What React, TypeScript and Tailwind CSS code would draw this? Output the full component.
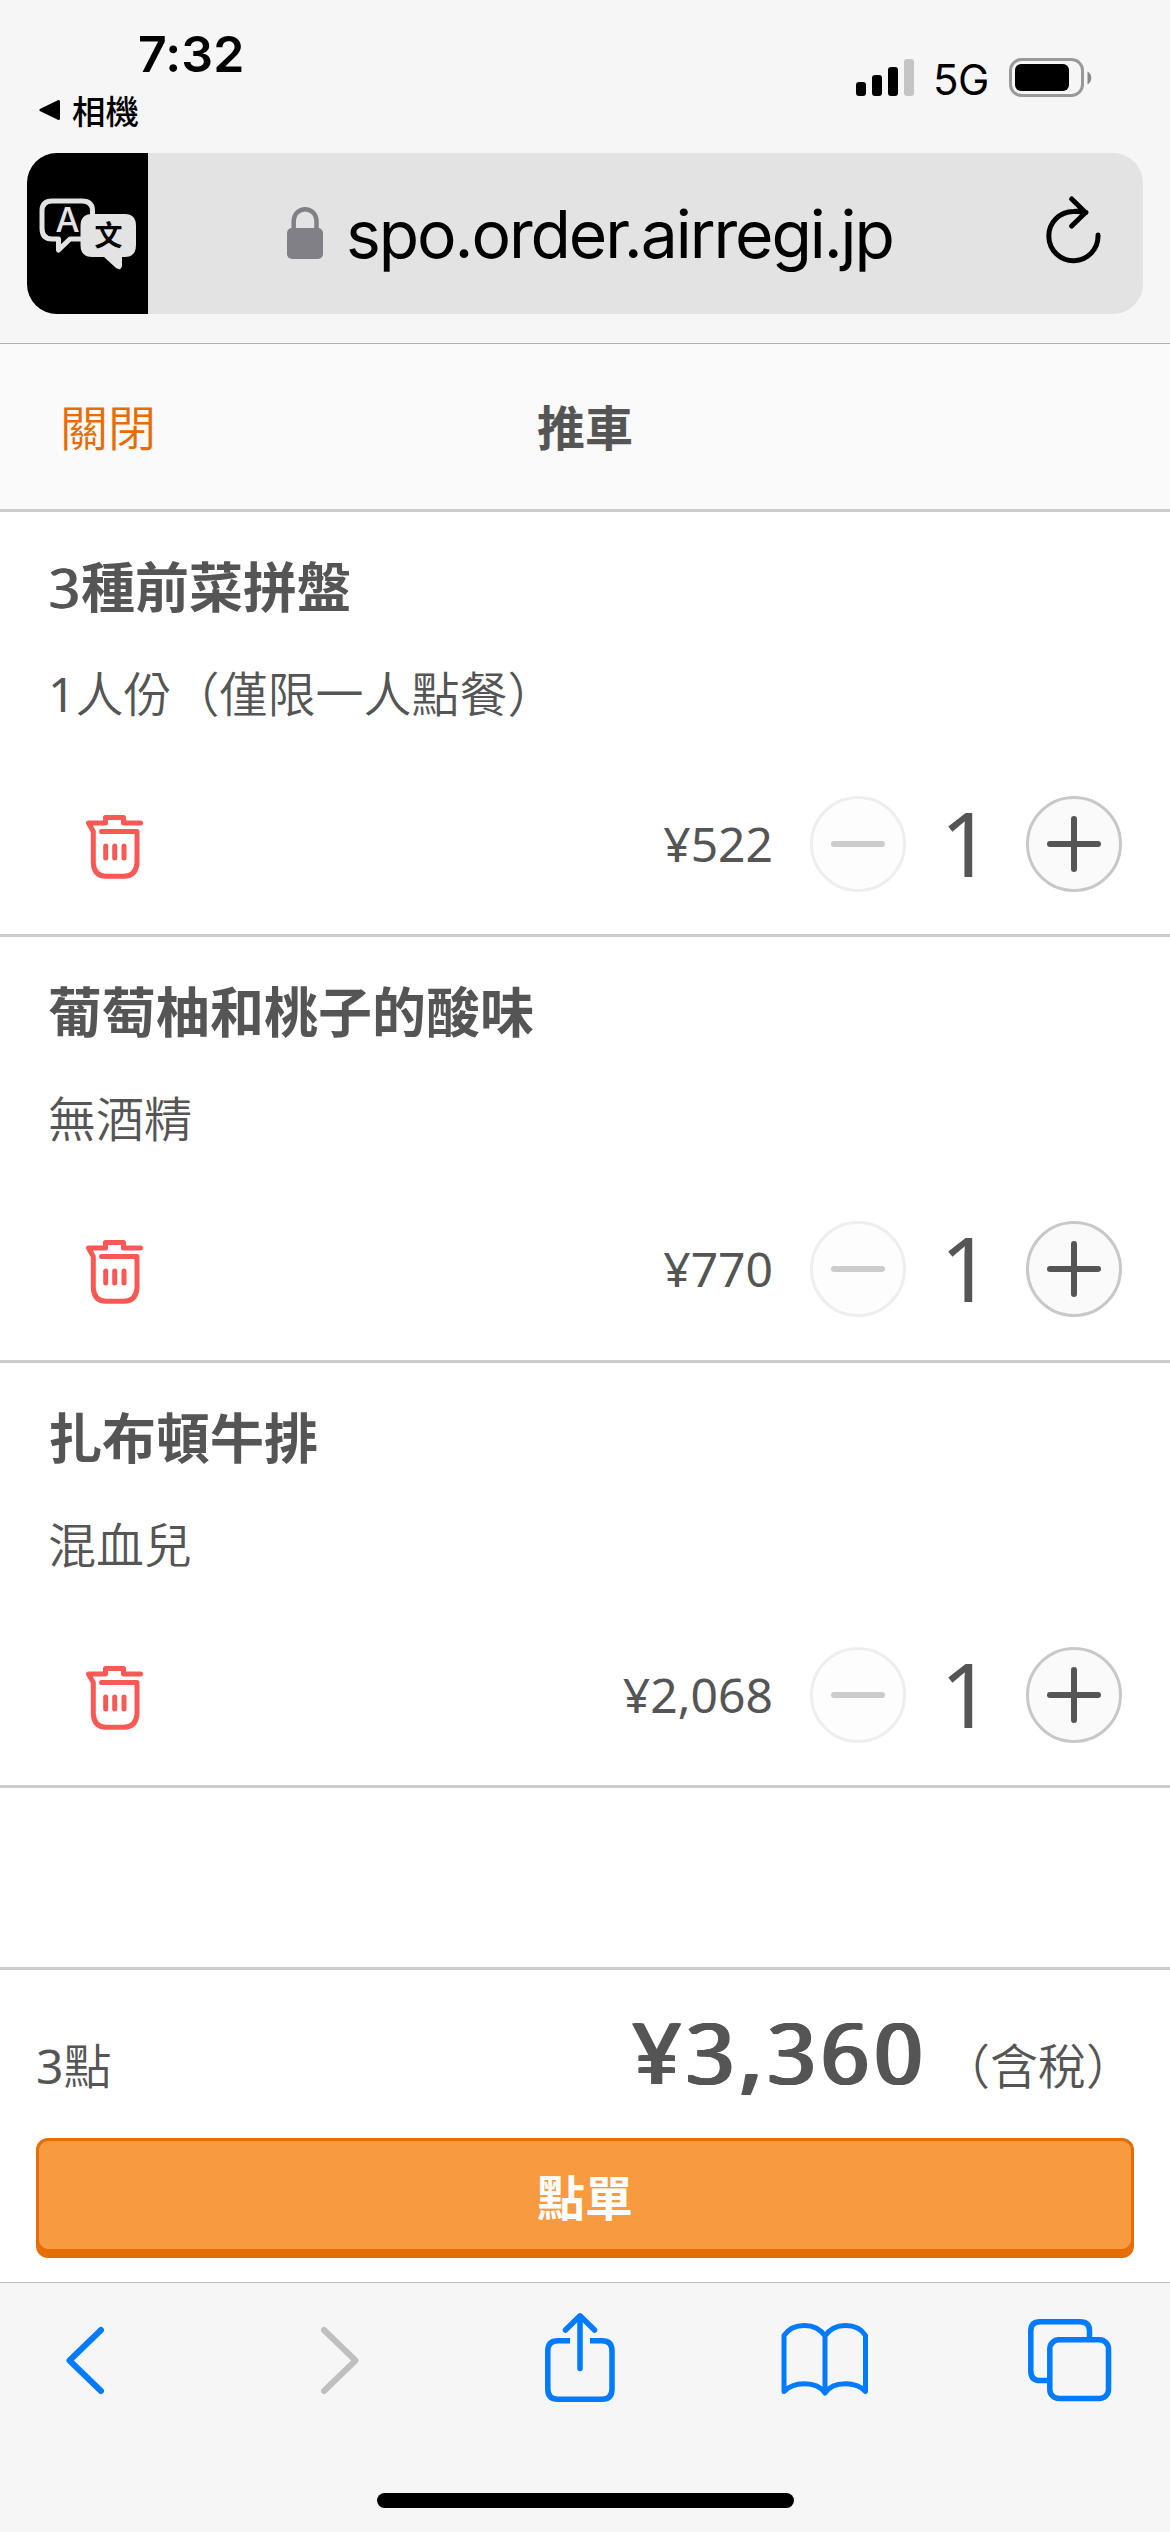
import React from "react";

const items = [
  { name: "種前菜拼盤", count: "3", note: "1人份（僅限一人點餐）", price: "¥522", qty: 1, h: "h-[425px]" },
  { name: "葡萄柚和桃子的酸味", note: "無酒精", price: "¥770", qty: 1, h: "h-[426px]" },
  { name: "扎布頓牛排", note: "混血兒", price: "¥2,068", qty: 1, h: "h-[425px]" },
];

/** Thin CJK text whose digits keep the regular weight. */
function ThinText({ children }: { children: string }) {
  return (
    <span className="font-[350]">
      {children.split(/(\d+)/).map((part, i) =>
        /^\d/.test(part) ? (
          <span key={i} className="font-normal">
            {part}
          </span>
        ) : (
          part
        ),
      )}
    </span>
  );
}

function StatusBar() {
  return (
    <div className="flex h-[153px] justify-between font-['Inter','Noto_Sans_CJK_TC',sans-serif] text-black">
      <div className="flex flex-col">
        <div className="mt-[29px] ml-[138px] text-[50px] leading-[50px] font-semibold tracking-[0.1px]">7:32</div>
        <div className="mt-[14px] ml-[39px] flex h-[34px] items-center">
          <svg width="22" height="22" viewBox="0 0 22 22">
            <path d="M2 11 L19.500 2.500 V19.500 Z" fill="#000" stroke="#000" strokeWidth="3" strokeLinejoin="round" />
          </svg>
          <span className="ml-[11px] font-['Noto_Sans_CJK_TC',sans-serif] text-[33.5px] leading-[34px] font-medium">相機</span>
        </div>
      </div>
      <div className="mt-[56px] mr-[77px] flex h-[42px] items-start">
        <svg width="60" height="42" viewBox="0 0 60 42">
          <rect x="1" y="26" width="10" height="14" rx="3" />
          <rect x="17" y="19" width="10" height="21" rx="3" />
          <rect x="33" y="11" width="10" height="29" rx="3" />
          <rect x="49" y="3" width="10" height="37" rx="3" fill="#c5c5c5" />
        </svg>
        <span className="ml-[18px] w-[60px] text-[42px] leading-[47px] tracking-[-0.5px]">5G</span>
        <svg className="ml-[16px]" width="84" height="44" viewBox="0 0 84 44">
          <rect x="1.500" y="3.500" width="72" height="36" rx="11" fill="none" stroke="#999" strokeWidth="3" />
          <rect x="6" y="8" width="54" height="27" rx="6" />
          <path d="M78.500 15.500 c5 2.500 5 10.500 0 13z" fill="#888" />
        </svg>
      </div>
    </div>
  );
}

function TranslateIcon() {
  return (
    <svg width="121" height="161" viewBox="27 153 121 161">
      <path
        d="M52 201 H82 Q92.500 201 92.500 211 V228 Q92.500 239 82 239 H70 L58.500 250 V239 H52 Q42 239 42 228 V211 Q42 201 52 201 Z"
        fill="none"
        stroke="#e3e3e3"
        strokeWidth="5"
        strokeLinejoin="round"
      />
      <text x="67.500" y="232" textAnchor="middle" className="font-['Inter',sans-serif] text-[34px] font-medium" fill="#e3e3e3">A</text>
      <path
        d="M92 214 H125 Q136 214 136 226 V245 Q136 257 125 257 H122 V266 Q121 271 116 268 L104 257 H92 Q80.500 257 80.500 245 V226 Q80.500 214 92 214 Z"
        fill="#e3e3e3"
      />
      <text x="108.500" y="245.500" textAnchor="middle" className="font-['Noto_Sans_CJK_TC',sans-serif] text-[28px] font-bold" fill="#000">文</text>
    </svg>
  );
}

function AddressBar() {
  return (
    <div className="mx-[27px] flex h-[161px] overflow-hidden rounded-[30px] bg-[#e3e3e3]">
      <div className="w-[121px] bg-black">
        <TranslateIcon />
      </div>
      <svg className="mt-[53px] ml-[139px]" width="36" height="54" viewBox="0 0 36 54">
        <path d="M6.700 24 V16 C6.700 -1 29.500 -1 29.500 16 V24" fill="none" stroke="#808086" strokeWidth="4.500" />
        <rect x="0" y="22" width="36" height="31" rx="5" fill="#808086" />
      </svg>
      <div className="mt-[40px] ml-[23px] w-[560px] font-['Inter',sans-serif] text-[66px] leading-[82px] tracking-[-2.100px] whitespace-nowrap text-black">
        spo.order.airregi.jp
      </div>
      <svg className="mt-[40px] ml-[136px]" width="62" height="74" viewBox="1042 193 62 74">
        <path
          d="M1098 235 A24.600 24.600 0 1 1 1073.400 211.500 Q1080 211 1086 212.500 M1071.700 199 L1085.500 212.500 L1071.700 226"
          fill="none"
          stroke="#000"
          strokeWidth="5"
          strokeLinecap="round"
          strokeLinejoin="round"
        />
      </svg>
    </div>
  );
}

function TrashIcon() {
  return (
    <svg width="60" height="68" viewBox="85 814 60 68">
      <g fill="none" stroke="#f85955" strokeWidth="5" strokeLinecap="round" strokeLinejoin="round">
        <path d="M140.500 824 H123.500 V818.500 H105.500 V824 H88.500 L93.300 832.500 V864 Q94 877 106 877.300 H124 Q136 877 137 864 V832.500 H101.500" />
        <path d="M105.700 847 V859 M114.700 847 V859 M124 847 V859" />
      </g>
    </svg>
  );
}

type ItemProps = { name: string; count?: string; note: string; price: string; qty: number; h: string };

function Item({ name, count, note, price, qty, h }: ItemProps) {
  return (
    <li className={`${h} border-b-3 border-[#ccc] pt-[48px] pr-[48px] pl-[48px]`}>
      <h2 className="text-[54px] leading-[54px] font-semibold">
        {count && <span className="font-normal tracking-[2px] [text-shadow:1px_0,2px_0]">{count}</span>}
        {name}
      </h2>
      <p className="mt-[56px] text-[48px] leading-[48px]">
        <ThinText>{note}</ThinText>
      </p>
      <div className="mt-[78px] flex h-24 items-center">
        <button className="ml-[37px] pt-[6px]">
          <TrashIcon />
        </button>
        <span className="mr-[37px] ml-auto text-[48px] leading-[48px]">{price}</span>
        <button className="grid size-24 place-items-center rounded-full border-3 border-[#eee] bg-[#fdfdfd]">
          <span className="h-[6px] w-[54px] rounded-full bg-[#ccc]" />
        </button>
        <span className="w-[120px] pb-[4px] text-center text-[90px] leading-[90px]">{qty}</span>
        <button className="grid size-24 place-items-center rounded-full border-3 border-[#c8c8c8] bg-[#fafafa]">
          <span className="col-start-1 row-start-1 h-[6px] w-[54px] rounded-full bg-[#555]" />
          <span className="col-start-1 row-start-1 h-[56px] w-[6px] rounded-full bg-[#555]" />
        </button>
      </div>
    </li>
  );
}

function Footer() {
  return (
    <div className="h-[315px] border-t-3 border-[#ccc] px-9">
      <div className="flex h-[168px] items-baseline pt-[40px]">
        <span className="text-[48px] leading-[84px]">
          <ThinText>3點</ThinText>
        </span>
        <span className="ml-auto text-[84px] leading-[84px] tracking-[5.400px] [text-shadow:1px_0,2px_0,3px_0,4px_0]">¥3,360</span>
        <span className="ml-[16px] text-[48px] leading-[84px]">
          <ThinText>（含稅）</ThinText>
        </span>
      </div>
      <button className="flex h-[120px] w-full items-center justify-center rounded-[12px] border-3 border-[#e56d08] bg-[#f89a40] text-[48px] leading-[48px] font-bold text-white shadow-[inset_0_-6px_0_#e56d08]">
        點單
      </button>
    </div>
  );
}

function Toolbar() {
  return (
    <div className="flex h-[250px] flex-col items-center border-t border-[#bfbfbf] bg-[#f6f6f6]">
      <div className="flex h-[154px] w-full items-center pl-[62px]">
        <svg width="46" height="74" viewBox="62 2323 46 74">
          <path d="M101 2330 L69.500 2360.500 L101 2391" fill="none" stroke="#007aff" strokeWidth="6" strokeLinecap="round" strokeLinejoin="round" />
        </svg>
        <svg className="ml-[211px]" width="46" height="74" viewBox="319 2323 46 74">
          <path d="M324 2330 L355.500 2360.500 L324 2391" fill="none" stroke="#bfbfbf" strokeWidth="6" strokeLinecap="round" strokeLinejoin="round" />
        </svg>
        <svg className="ml-[176px]" width="78" height="98" viewBox="541 2311 78 98">
          <g fill="none" stroke="#007aff" strokeWidth="5.500" strokeLinejoin="round">
            <path d="M570 2340.800 H558 Q547.800 2340.800 547.800 2351 V2389 Q547.800 2399.200 558 2399.200 H602 Q612 2399.200 612 2389 V2351 Q612 2340.800 602 2340.800 H590" />
            <path d="M580 2368.500 V2316 M565.500 2330 L580 2315.800 L594.500 2330" strokeLinecap="round" />
          </g>
        </svg>
        <svg className="ml-[160px]" width="92" height="84" viewBox="779 2318 92 84">
          <path
            d="M825 2393 V2336 C816 2322 793 2322 784 2335.500 V2391.500 C793 2382 816 2380 825 2393 C834 2380 857 2382 865.500 2391.500 V2335.500 C857 2322 834 2322 825 2336"
            fill="none"
            stroke="#007aff"
            strokeWidth="5"
            strokeLinejoin="round"
          />
        </svg>
        <svg className="ml-[154px]" width="90" height="90" viewBox="1025 2315 90 90">
          <g fill="none" stroke="#007aff" strokeWidth="5.500">
            <path d="M1049 2380.600 H1040 Q1030.800 2380.600 1030.800 2371 V2331 Q1030.800 2321.800 1040 2321.800 H1080 Q1089.500 2321.800 1089.500 2331 V2340" />
            <rect x="1049.800" y="2339.800" width="58.700" height="58.700" rx="9" />
          </g>
        </svg>
      </div>
      <div className="mt-[56px] h-[15px] w-[417px] rounded-full bg-black" />
    </div>
  );
}

export default function App() {
  return (
    <div className="flex h-[2532px] w-[1170px] flex-col overflow-hidden bg-white font-['Noto_Sans','Noto_Sans_CJK_TC',sans-serif] text-[#555]">
      <div className="h-[344px] border-b border-[#b0b0b0] bg-[#f6f6f6]">
        <StatusBar />
        <AddressBar />
      </div>
      <header className="grid h-[168px] grid-cols-3 items-center border-b-3 border-[#ccc] bg-[#fafafa] pt-[2px] text-[48px] leading-[48px]">
        <button className="justify-self-start pl-[60px] text-[#e56d08]">
          <ThinText>關閉</ThinText>
        </button>
        <h1 className="text-center font-bold">推車</h1>
      </header>
      <ul>
        {items.map((item) => (
          <Item key={item.name} {...item} />
        ))}
      </ul>
      <div className="mt-auto">
        <Footer />
        <Toolbar />
      </div>
    </div>
  );
}
